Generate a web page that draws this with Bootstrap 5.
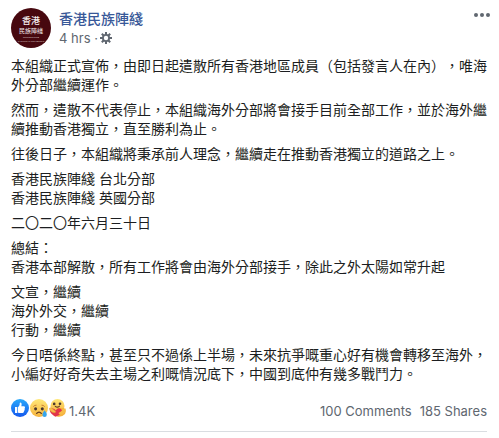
<!DOCTYPE html>
<html lang="zh-Hant">
<head>
<meta charset="utf-8">
<meta name="viewport" content="width=device-width, initial-scale=1">
<title>香港民族陣綫</title>
<link href="https://cdn.jsdelivr.net/npm/bootstrap@5.3.0/dist/css/bootstrap.min.css" rel="stylesheet">
<style>
body { font-family: Inter, "Noto Sans CJK TC", sans-serif; font-size: 14px; line-height: 19px; color: #1c1e21; background: #fff; }
.post { padding: 8px 12px 0 11px; }
.post-head { margin-right: -3px; gap: 8px; }
.avatar { width: 40px; height: 40px; }
.page-name { color: #385898; font-weight: 500; line-height: 20px; padding-top: 1px; }
.meta, .counts, .counts a { color: #606770; font-size: 13px; }
.meta { line-height: 18px; gap: 2px; }
.dots { color: #606770; line-height: 0; padding: 5px 0; }
.message { padding-top: 8px; text-spacing-trim: space-all; }
.message p { margin-bottom: 6px; }
.counts { margin-top: 16px; padding-bottom: 7px; border-bottom: 1px solid #dadde1; line-height: 25px; }
.reactions { gap: 1px; margin-right: 2px; }
</style>
</head>
<body>
<article class="post">
  <header class="post-head d-flex align-items-start">
    <a href="#" class="d-block flex-shrink-0 avatar" aria-label="香港民族陣綫">
      <svg class="d-block" width="40" height="40" viewBox="0 0 40 40">
        <circle cx="20" cy="20" r="20" fill="#47080f"/>
        <g fill="#f3eeee" text-anchor="middle" font-family="Noto Sans CJK TC, sans-serif">
          <text x="20" y="16" font-size="9" font-weight="500">香港</text>
          <text x="20" y="25" font-size="6">民族陣綫</text>
          <g font-family="Liberation Serif, serif" font-weight="700" fill="#d9c4c6">
            <text x="20" y="30" font-size="2.500">HONG KONG</text>
            <text x="20" y="34" font-size="2.500">NATIONALIST FRONT</text>
          </g>
        </g>
      </svg>
    </a>
    <div class="flex-grow-1">
      <a href="#" class="page-name d-block text-decoration-none">香港民族陣綫</a>
      <div class="meta d-flex align-items-center">
        <span>4 hrs ·</span>
        <svg width="12" height="12" viewBox="0 0 12 12" aria-hidden="true">
          <g stroke="#606770" stroke-width="2"><path d="M6 0v12M0 6h12M1.800 1.800l8.400 8.400M10.200 1.800l-8.400 8.400"/></g>
          <circle cx="6" cy="6" r="4" fill="#606770"/><circle cx="6" cy="6" r="2.200" fill="#fff"/>
        </svg>
      </div>
    </div>
    <button type="button" class="dots btn border-0" aria-label="More">
      <svg width="16" height="4" viewBox="0 0 16 4" fill="currentColor"><circle cx="2" cy="2" r="2"/><circle cx="8" cy="2" r="2"/><circle cx="14" cy="2" r="2"/></svg>
    </button>
  </header>

  <div class="message">
    <p>本組織正式宣佈，由即日起遣散所有香港地區成員（包括發言人在內），唯海外分部繼續運作。</p>
    <p>然而，遣散不代表停止，本組織海外分部將會接手目前全部工作，並於海外繼續推動香港獨立，直至勝利為止。</p>
    <p>往後日子，本組織將秉承前人理念，繼續走在推動香港獨立的道路之上。</p>
    <p>香港民族陣綫 台北分部<br>香港民族陣綫 英國分部</p>
    <p>二〇二〇年六月三十日</p>
    <p>總結：<br>香港本部解散，所有工作將會由海外分部接手，除此之外太陽如常升起</p>
    <p>文宣，繼續<br>海外外交，繼續<br>行動，繼續</p>
    <p>今日唔係終點，甚至只不過係上半場，未來抗爭嘅重心好有機會轉移至海外，小編好好奇失去主場之利嘅情況底下，中國到底仲有幾多戰鬥力。</p>
  </div>

  <footer class="counts d-flex align-items-start">
    <div class="reactions d-flex">
      <svg width="18" height="18" viewBox="0 0 18 18" role="img" aria-label="Like">
        <defs><linearGradient id="blue" x2="0" y2="1"><stop stop-color="#2aa9fb"/><stop offset="1" stop-color="#1558ee"/></linearGradient></defs>
        <circle cx="9" cy="9" r="9" fill="url(#blue)"/>
        <path d="M4 8h2.300v6H4.400Q4 14 4 13.500zM7 8.200C8.300 7.200 8.800 6.100 8.700 4.300Q8.800 3.500 9.500 3.600C10.800 3.800 10.900 5.500 10.300 7.300H13Q14.300 7.500 14 8.600Q13.900 9.100 13.600 9.400Q14.200 10.300 13.400 11.100Q13.700 12 12.900 12.600Q13 14 11.600 14H8.800Q7.700 14 7 13.500z" fill="#fff"/>
      </svg>
      <svg width="18" height="18" viewBox="0 0 18 18" role="img" aria-label="Sad">
        <defs><linearGradient id="gold" x2="0" y2="1"><stop stop-color="#ffe878"/><stop offset="1" stop-color="#f5b33e"/></linearGradient></defs>
        <circle cx="9" cy="9" r="9" fill="url(#gold)"/>
        <path d="M3.300 7.600Q4.600 6 6.500 6.200M11.500 6.200Q13.400 6 14.700 7.600" fill="none" stroke="#c5752f" stroke-width=".9"/>
        <ellipse cx="5.600" cy="9.800" rx="1.500" ry="1.600" fill="#47352d"/><ellipse cx="12.300" cy="9.800" rx="1.500" ry="1.600" fill="#47352d"/>
        <path d="M6.700 14.400Q9 11.800 11.300 14.400" fill="none" stroke="#5c3820" stroke-width="1.300" stroke-linecap="round"/>
        <path d="M14.600 11.200Q17 14 16.800 15.700A2.200 2.200 0 0 1 12.400 15.700Q12.400 14 14.600 11.200z" fill="#36a5ed"/>
      </svg>
      <svg width="18" height="18" viewBox="0 0 18 18" role="img" aria-label="Care">
        <circle cx="8.500" cy="7" r="7" fill="url(#gold)"/>
        <path d="M9 9H15Q18 11 16 15Q13 18.500 8 17.500L4 16z" fill="#f5b33e"/>
        <circle cx="5.200" cy="4.900" r="1.300" fill="#47352d"/><circle cx="11" cy="4.700" r="1.300" fill="#47352d"/>
        <path d="M6.300 7.400Q8.300 9 10.500 7.100" fill="none" stroke="#5c3820" stroke-width="1.100" stroke-linecap="round"/>
        <path d="M6.300 17.700Q1 14.500 .8 11.500Q1.300 9 4 9.500Q6 9.900 6.700 11.500Q8.600 8.600 11.200 9.600Q13.900 11 12.300 14Q10.600 16.700 6.300 17.700z" fill="#e2344a"/>
        <path d="M.2 9.500Q1.500 7.800 3.200 9.600L6.800 12.600Q6.800 14 5 13.800Q.8 12.900 .2 9.500z" fill="#f7bc49" stroke="#df8c35" stroke-width=".4"/>
        <path d="M16.800 9.500Q14 9.500 13.300 11.500L9.600 14Q9.600 15.800 11.700 15.600Q16.600 14.800 16.800 9.500z" fill="#f7bc49"/>
      </svg>
    </div>
    <span>1.4K</span>
    <a href="#" class="ms-auto text-decoration-none">100 Comments</a>
    <a href="#" class="ms-2 text-decoration-none">185 Shares</a>
  </footer>
</article>
<script src="https://cdn.jsdelivr.net/npm/bootstrap@5.3.0/dist/js/bootstrap.bundle.min.js"></script>
</body>
</html>
